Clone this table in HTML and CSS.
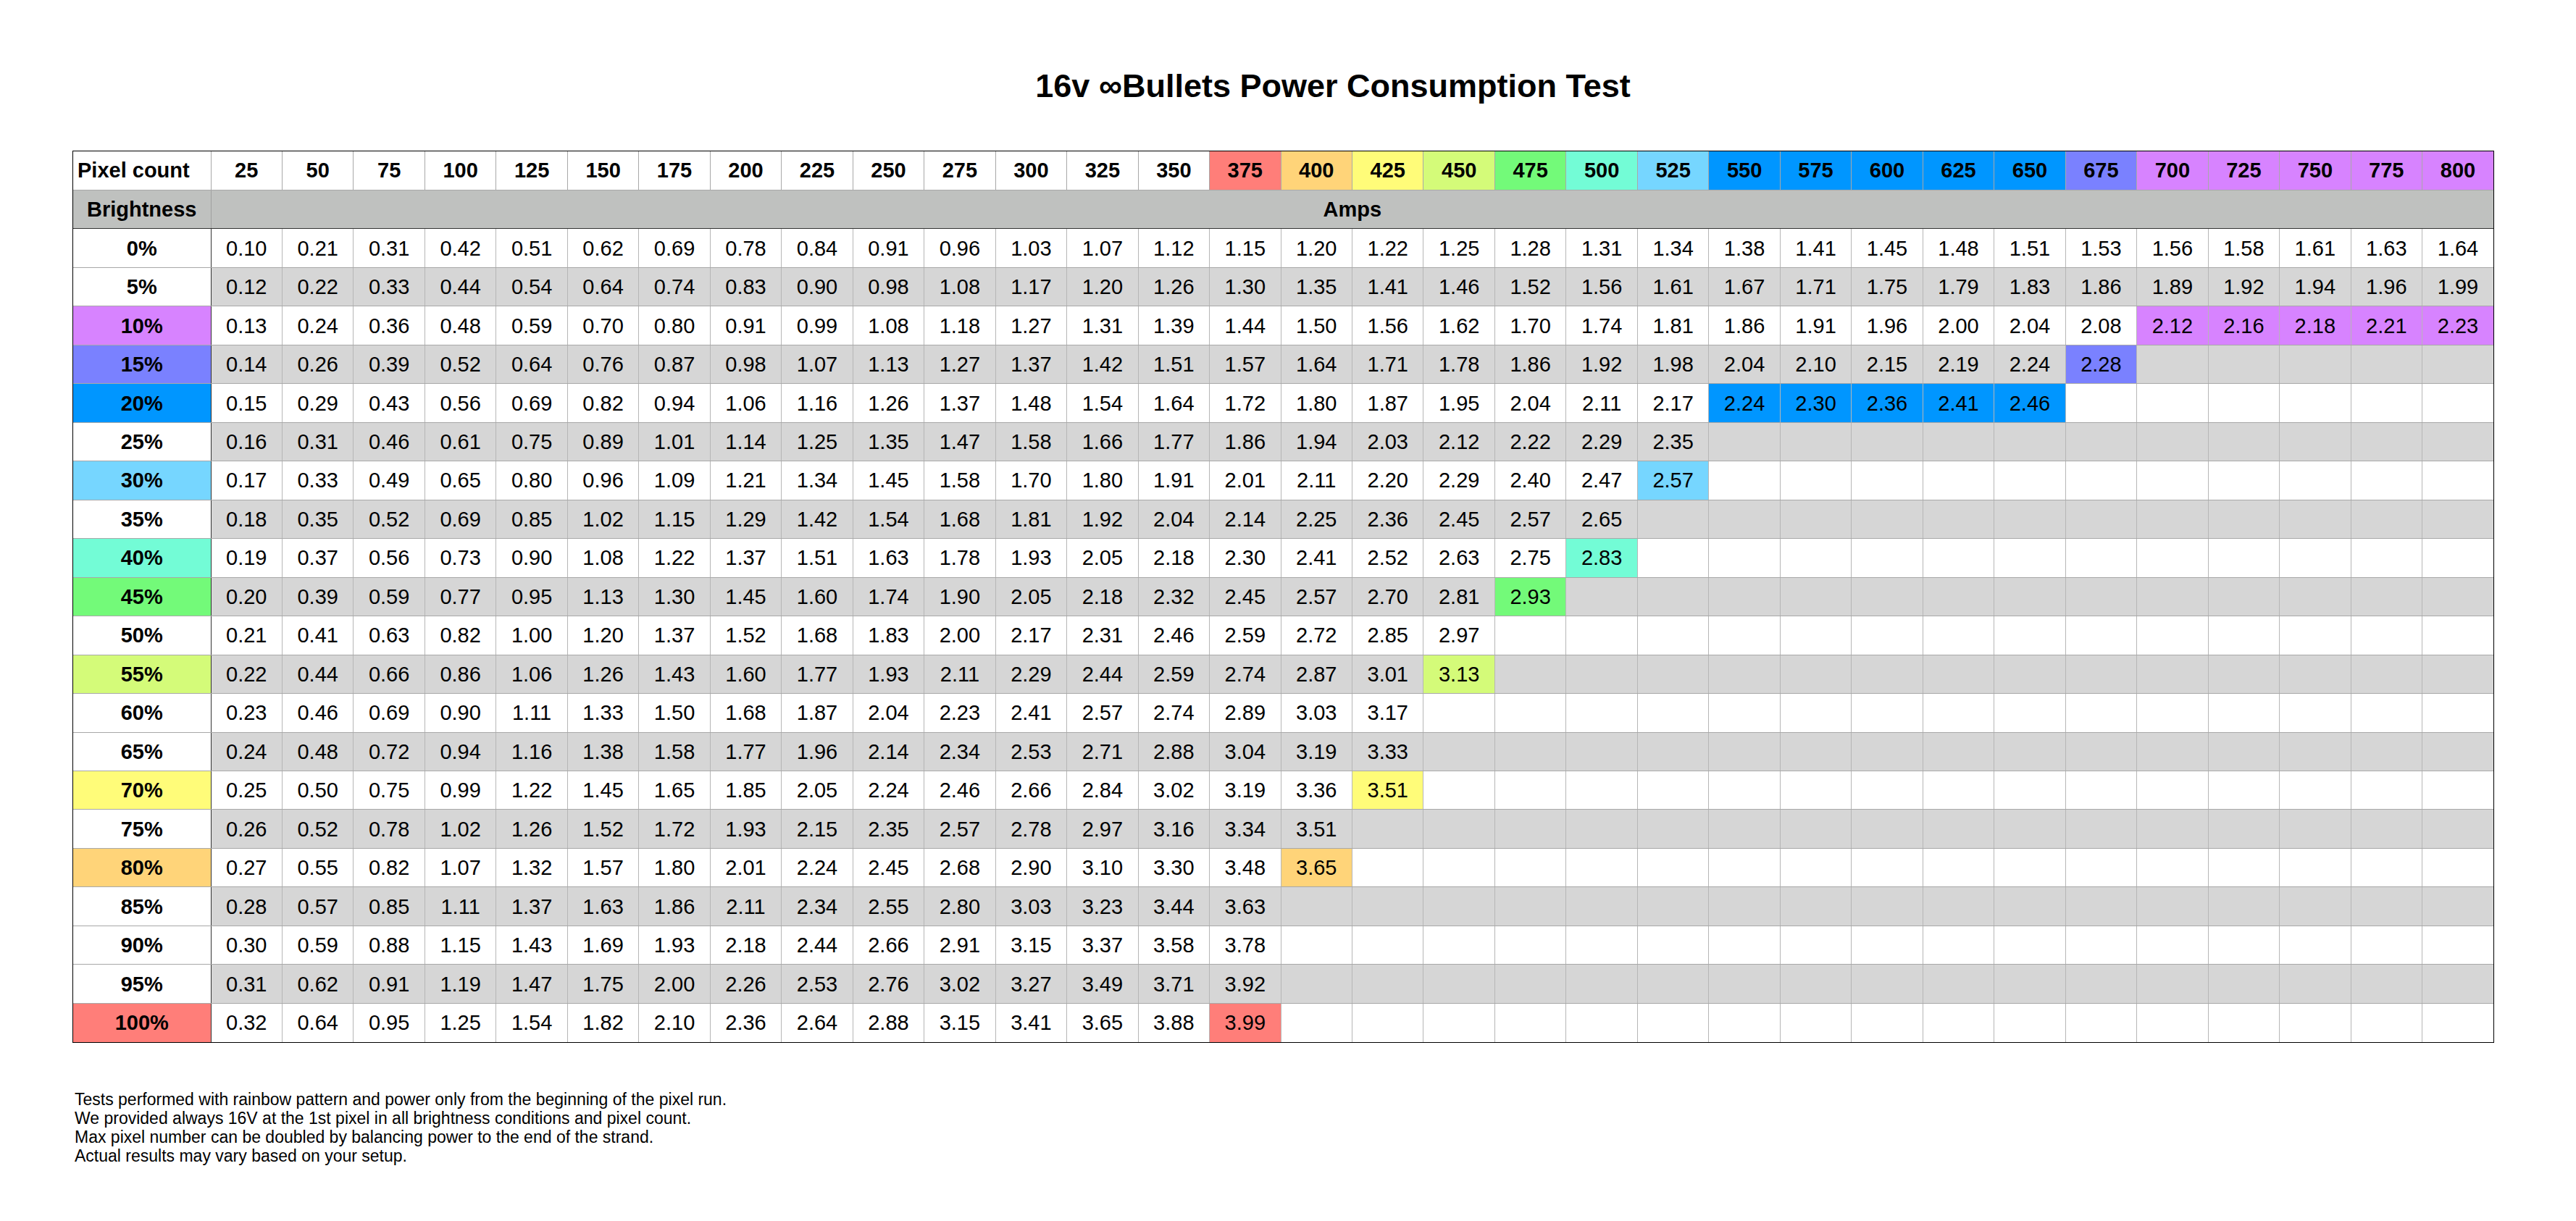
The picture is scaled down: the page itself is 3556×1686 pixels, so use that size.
FILE: index.html
```html
<!DOCTYPE html>
<html lang="en">
<head>
<meta charset="utf-8">
<title>16v ∞Bullets Power Consumption Test</title>
<link rel="stylesheet" href="styles.css">
</head>
<body>
<h1 class="title">16v ∞Bullets Power Consumption Test</h1>
<div class="wrap">
<div class="frame">
<table class="grid">
<colgroup><col class="first"><col span="32"></colgroup>
<thead>
<tr class="head"><th class="pc">Pixel count</th><th>25</th><th>50</th><th>75</th><th>100</th><th>125</th><th>150</th><th>175</th><th>200</th><th>225</th><th>250</th><th>275</th><th>300</th><th>325</th><th>350</th><th class="salmon">375</th><th class="cantaloupe">400</th><th class="banana">425</th><th class="honeydew">450</th><th class="flora">475</th><th class="spindrift">500</th><th class="sky">525</th><th class="aqua">550</th><th class="aqua">575</th><th class="aqua">600</th><th class="aqua">625</th><th class="aqua">650</th><th class="orchid">675</th><th class="lavender">700</th><th class="lavender">725</th><th class="lavender">750</th><th class="lavender">775</th><th class="lavender">800</th></tr>
<tr class="sub"><th>Brightness</th><th colspan="32">Amps</th></tr>
</thead>
<tbody>
<tr><th class="lbl">0%</th><td>0.10</td><td>0.21</td><td>0.31</td><td>0.42</td><td>0.51</td><td>0.62</td><td>0.69</td><td>0.78</td><td>0.84</td><td>0.91</td><td>0.96</td><td>1.03</td><td>1.07</td><td>1.12</td><td>1.15</td><td>1.20</td><td>1.22</td><td>1.25</td><td>1.28</td><td>1.31</td><td>1.34</td><td>1.38</td><td>1.41</td><td>1.45</td><td>1.48</td><td>1.51</td><td>1.53</td><td>1.56</td><td>1.58</td><td>1.61</td><td>1.63</td><td>1.64</td></tr>
<tr class="alt"><th class="lbl">5%</th><td>0.12</td><td>0.22</td><td>0.33</td><td>0.44</td><td>0.54</td><td>0.64</td><td>0.74</td><td>0.83</td><td>0.90</td><td>0.98</td><td>1.08</td><td>1.17</td><td>1.20</td><td>1.26</td><td>1.30</td><td>1.35</td><td>1.41</td><td>1.46</td><td>1.52</td><td>1.56</td><td>1.61</td><td>1.67</td><td>1.71</td><td>1.75</td><td>1.79</td><td>1.83</td><td>1.86</td><td>1.89</td><td>1.92</td><td>1.94</td><td>1.96</td><td>1.99</td></tr>
<tr><th class="lbl lavender">10%</th><td>0.13</td><td>0.24</td><td>0.36</td><td>0.48</td><td>0.59</td><td>0.70</td><td>0.80</td><td>0.91</td><td>0.99</td><td>1.08</td><td>1.18</td><td>1.27</td><td>1.31</td><td>1.39</td><td>1.44</td><td>1.50</td><td>1.56</td><td>1.62</td><td>1.70</td><td>1.74</td><td>1.81</td><td>1.86</td><td>1.91</td><td>1.96</td><td>2.00</td><td>2.04</td><td>2.08</td><td class="lavender">2.12</td><td class="lavender">2.16</td><td class="lavender">2.18</td><td class="lavender">2.21</td><td class="lavender">2.23</td></tr>
<tr class="alt"><th class="lbl orchid">15%</th><td>0.14</td><td>0.26</td><td>0.39</td><td>0.52</td><td>0.64</td><td>0.76</td><td>0.87</td><td>0.98</td><td>1.07</td><td>1.13</td><td>1.27</td><td>1.37</td><td>1.42</td><td>1.51</td><td>1.57</td><td>1.64</td><td>1.71</td><td>1.78</td><td>1.86</td><td>1.92</td><td>1.98</td><td>2.04</td><td>2.10</td><td>2.15</td><td>2.19</td><td>2.24</td><td class="orchid">2.28</td><td></td><td></td><td></td><td></td><td></td></tr>
<tr><th class="lbl aqua">20%</th><td>0.15</td><td>0.29</td><td>0.43</td><td>0.56</td><td>0.69</td><td>0.82</td><td>0.94</td><td>1.06</td><td>1.16</td><td>1.26</td><td>1.37</td><td>1.48</td><td>1.54</td><td>1.64</td><td>1.72</td><td>1.80</td><td>1.87</td><td>1.95</td><td>2.04</td><td>2.11</td><td>2.17</td><td class="aqua">2.24</td><td class="aqua">2.30</td><td class="aqua">2.36</td><td class="aqua">2.41</td><td class="aqua">2.46</td><td></td><td></td><td></td><td></td><td></td><td></td></tr>
<tr class="alt"><th class="lbl">25%</th><td>0.16</td><td>0.31</td><td>0.46</td><td>0.61</td><td>0.75</td><td>0.89</td><td>1.01</td><td>1.14</td><td>1.25</td><td>1.35</td><td>1.47</td><td>1.58</td><td>1.66</td><td>1.77</td><td>1.86</td><td>1.94</td><td>2.03</td><td>2.12</td><td>2.22</td><td>2.29</td><td>2.35</td><td></td><td></td><td></td><td></td><td></td><td></td><td></td><td></td><td></td><td></td><td></td></tr>
<tr><th class="lbl sky">30%</th><td>0.17</td><td>0.33</td><td>0.49</td><td>0.65</td><td>0.80</td><td>0.96</td><td>1.09</td><td>1.21</td><td>1.34</td><td>1.45</td><td>1.58</td><td>1.70</td><td>1.80</td><td>1.91</td><td>2.01</td><td>2.11</td><td>2.20</td><td>2.29</td><td>2.40</td><td>2.47</td><td class="sky">2.57</td><td></td><td></td><td></td><td></td><td></td><td></td><td></td><td></td><td></td><td></td><td></td></tr>
<tr class="alt"><th class="lbl">35%</th><td>0.18</td><td>0.35</td><td>0.52</td><td>0.69</td><td>0.85</td><td>1.02</td><td>1.15</td><td>1.29</td><td>1.42</td><td>1.54</td><td>1.68</td><td>1.81</td><td>1.92</td><td>2.04</td><td>2.14</td><td>2.25</td><td>2.36</td><td>2.45</td><td>2.57</td><td>2.65</td><td></td><td></td><td></td><td></td><td></td><td></td><td></td><td></td><td></td><td></td><td></td><td></td></tr>
<tr><th class="lbl spindrift">40%</th><td>0.19</td><td>0.37</td><td>0.56</td><td>0.73</td><td>0.90</td><td>1.08</td><td>1.22</td><td>1.37</td><td>1.51</td><td>1.63</td><td>1.78</td><td>1.93</td><td>2.05</td><td>2.18</td><td>2.30</td><td>2.41</td><td>2.52</td><td>2.63</td><td>2.75</td><td class="spindrift">2.83</td><td></td><td></td><td></td><td></td><td></td><td></td><td></td><td></td><td></td><td></td><td></td><td></td></tr>
<tr class="alt"><th class="lbl flora">45%</th><td>0.20</td><td>0.39</td><td>0.59</td><td>0.77</td><td>0.95</td><td>1.13</td><td>1.30</td><td>1.45</td><td>1.60</td><td>1.74</td><td>1.90</td><td>2.05</td><td>2.18</td><td>2.32</td><td>2.45</td><td>2.57</td><td>2.70</td><td>2.81</td><td class="flora">2.93</td><td></td><td></td><td></td><td></td><td></td><td></td><td></td><td></td><td></td><td></td><td></td><td></td><td></td></tr>
<tr><th class="lbl">50%</th><td>0.21</td><td>0.41</td><td>0.63</td><td>0.82</td><td>1.00</td><td>1.20</td><td>1.37</td><td>1.52</td><td>1.68</td><td>1.83</td><td>2.00</td><td>2.17</td><td>2.31</td><td>2.46</td><td>2.59</td><td>2.72</td><td>2.85</td><td>2.97</td><td></td><td></td><td></td><td></td><td></td><td></td><td></td><td></td><td></td><td></td><td></td><td></td><td></td><td></td></tr>
<tr class="alt"><th class="lbl honeydew">55%</th><td>0.22</td><td>0.44</td><td>0.66</td><td>0.86</td><td>1.06</td><td>1.26</td><td>1.43</td><td>1.60</td><td>1.77</td><td>1.93</td><td>2.11</td><td>2.29</td><td>2.44</td><td>2.59</td><td>2.74</td><td>2.87</td><td>3.01</td><td class="honeydew">3.13</td><td></td><td></td><td></td><td></td><td></td><td></td><td></td><td></td><td></td><td></td><td></td><td></td><td></td><td></td></tr>
<tr><th class="lbl">60%</th><td>0.23</td><td>0.46</td><td>0.69</td><td>0.90</td><td>1.11</td><td>1.33</td><td>1.50</td><td>1.68</td><td>1.87</td><td>2.04</td><td>2.23</td><td>2.41</td><td>2.57</td><td>2.74</td><td>2.89</td><td>3.03</td><td>3.17</td><td></td><td></td><td></td><td></td><td></td><td></td><td></td><td></td><td></td><td></td><td></td><td></td><td></td><td></td><td></td></tr>
<tr class="alt"><th class="lbl">65%</th><td>0.24</td><td>0.48</td><td>0.72</td><td>0.94</td><td>1.16</td><td>1.38</td><td>1.58</td><td>1.77</td><td>1.96</td><td>2.14</td><td>2.34</td><td>2.53</td><td>2.71</td><td>2.88</td><td>3.04</td><td>3.19</td><td>3.33</td><td></td><td></td><td></td><td></td><td></td><td></td><td></td><td></td><td></td><td></td><td></td><td></td><td></td><td></td><td></td></tr>
<tr><th class="lbl banana">70%</th><td>0.25</td><td>0.50</td><td>0.75</td><td>0.99</td><td>1.22</td><td>1.45</td><td>1.65</td><td>1.85</td><td>2.05</td><td>2.24</td><td>2.46</td><td>2.66</td><td>2.84</td><td>3.02</td><td>3.19</td><td>3.36</td><td class="banana">3.51</td><td></td><td></td><td></td><td></td><td></td><td></td><td></td><td></td><td></td><td></td><td></td><td></td><td></td><td></td><td></td></tr>
<tr class="alt"><th class="lbl">75%</th><td>0.26</td><td>0.52</td><td>0.78</td><td>1.02</td><td>1.26</td><td>1.52</td><td>1.72</td><td>1.93</td><td>2.15</td><td>2.35</td><td>2.57</td><td>2.78</td><td>2.97</td><td>3.16</td><td>3.34</td><td>3.51</td><td></td><td></td><td></td><td></td><td></td><td></td><td></td><td></td><td></td><td></td><td></td><td></td><td></td><td></td><td></td><td></td></tr>
<tr><th class="lbl cantaloupe">80%</th><td>0.27</td><td>0.55</td><td>0.82</td><td>1.07</td><td>1.32</td><td>1.57</td><td>1.80</td><td>2.01</td><td>2.24</td><td>2.45</td><td>2.68</td><td>2.90</td><td>3.10</td><td>3.30</td><td>3.48</td><td class="cantaloupe">3.65</td><td></td><td></td><td></td><td></td><td></td><td></td><td></td><td></td><td></td><td></td><td></td><td></td><td></td><td></td><td></td><td></td></tr>
<tr class="alt"><th class="lbl">85%</th><td>0.28</td><td>0.57</td><td>0.85</td><td>1.11</td><td>1.37</td><td>1.63</td><td>1.86</td><td>2.11</td><td>2.34</td><td>2.55</td><td>2.80</td><td>3.03</td><td>3.23</td><td>3.44</td><td>3.63</td><td></td><td></td><td></td><td></td><td></td><td></td><td></td><td></td><td></td><td></td><td></td><td></td><td></td><td></td><td></td><td></td><td></td></tr>
<tr><th class="lbl">90%</th><td>0.30</td><td>0.59</td><td>0.88</td><td>1.15</td><td>1.43</td><td>1.69</td><td>1.93</td><td>2.18</td><td>2.44</td><td>2.66</td><td>2.91</td><td>3.15</td><td>3.37</td><td>3.58</td><td>3.78</td><td></td><td></td><td></td><td></td><td></td><td></td><td></td><td></td><td></td><td></td><td></td><td></td><td></td><td></td><td></td><td></td><td></td></tr>
<tr class="alt"><th class="lbl">95%</th><td>0.31</td><td>0.62</td><td>0.91</td><td>1.19</td><td>1.47</td><td>1.75</td><td>2.00</td><td>2.26</td><td>2.53</td><td>2.76</td><td>3.02</td><td>3.27</td><td>3.49</td><td>3.71</td><td>3.92</td><td></td><td></td><td></td><td></td><td></td><td></td><td></td><td></td><td></td><td></td><td></td><td></td><td></td><td></td><td></td><td></td><td></td></tr>
<tr><th class="lbl salmon">100%</th><td>0.32</td><td>0.64</td><td>0.95</td><td>1.25</td><td>1.54</td><td>1.82</td><td>2.10</td><td>2.36</td><td>2.64</td><td>2.88</td><td>3.15</td><td>3.41</td><td>3.65</td><td>3.88</td><td class="salmon">3.99</td><td></td><td></td><td></td><td></td><td></td><td></td><td></td><td></td><td></td><td></td><td></td><td></td><td></td><td></td><td></td><td></td><td></td></tr>
</tbody>
</table>
</div>
</div>
<div class="notes">
<p>Tests performed with rainbow pattern and power only from the beginning of the pixel run.</p>
<p>We provided always 16V at the 1st pixel in all brightness conditions and pixel count.</p>
<p>Max pixel number can be doubled by balancing power to the end of the strand.</p>
<p>Actual results may vary based on your setup.</p>
</div>
</body>
</html>
```
FILE: styles.css
```css
* {
  box-sizing: border-box;
}

body {
  margin: 0;
  background: #ffffff;
  color: #000000;
  font-family: "Liberation Sans", Arial, Helvetica, sans-serif;
}

.title {
  margin: 0;
  padding: 92px 0 0 124px;
  font-size: 45px;
  line-height: 53px;
  font-weight: bold;
  text-align: center;
}

.wrap {
  padding: 63px 0 0 100px;
}

.frame {
  display: inline-block;
  border: 1px solid #000000;
  vertical-align: top;
}

.grid {
  border-collapse: collapse;
  border-style: hidden;
  table-layout: fixed;
  width: 3341px;
}

.grid col.first {
  width: 190px;
}

.grid tr {
  height: 53.48px;
}

.grid td,
.grid th {
  padding: 0;
  text-align: center;
  vertical-align: middle;
  font-size: 29px;
  line-height: 34px;
  border-top: 1px solid #a8a8a8;
  border-bottom: 1px solid #a8a8a8;
  border-left: 1px solid #b6b6b6;
  border-right: 1px solid #b6b6b6;
  white-space: nowrap;
}

.grid th {
  font-weight: bold;
}

.grid td {
  font-weight: normal;
}

.head th {
  background: #ffffff;
  border-left-color: #a8a8a8;
  border-right-color: #a8a8a8;
}

.head th.pc {
  text-align: left;
  padding-left: 6px;
}

.sub th {
  background: #bfc1bf;
  border-bottom: 1px solid #333333;
  border-left-color: #a0a0a0;
  border-right-color: #a0a0a0;
}

.grid .lbl {
  background: #ffffff;
  border-right: 1px solid #333333;
}

.alt td {
  background: #d6d6d6;
}

.grid .salmon { background: #ff7e79; }
.grid .cantaloupe { background: #ffd479; }
.grid .banana { background: #fffc79; }
.grid .honeydew { background: #d4fb79; }
.grid .flora { background: #73fa79; }
.grid .spindrift { background: #73fcd6; }
.grid .sky { background: #76d6ff; }
.grid .aqua { background: #0096ff; }
.grid .orchid { background: #7a81ff; }
.grid .lavender { background: #d783ff; }

.notes {
  padding: 65px 0 0 103px;
  font-size: 23px;
  line-height: 26px;
}

.notes p {
  margin: 0;
}
```
